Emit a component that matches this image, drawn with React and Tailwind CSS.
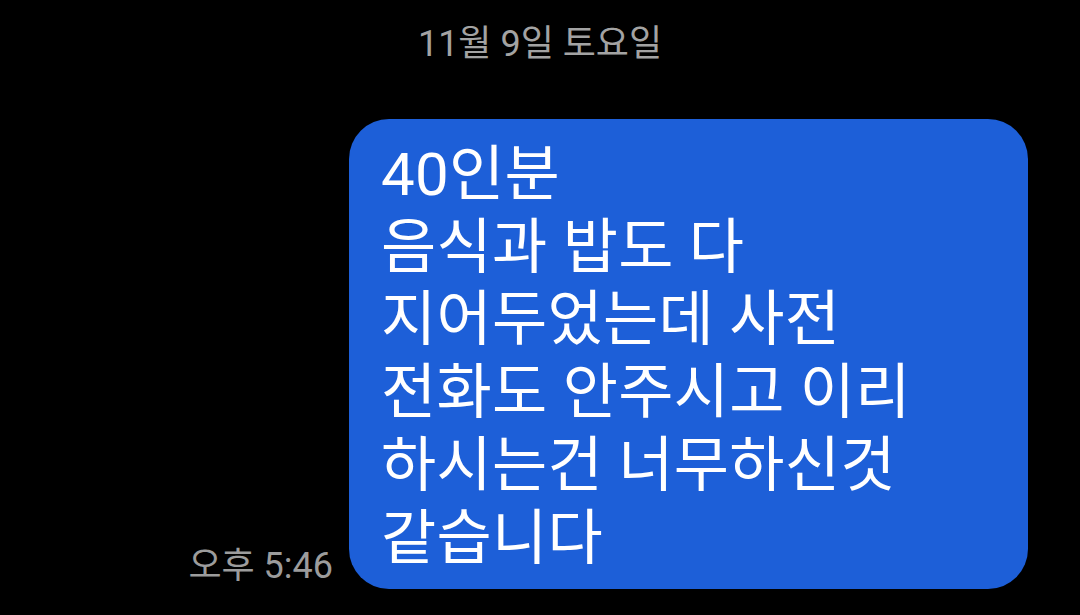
const lines = [
  "40인분",
  "음식과 밥도 다",
  "지어두었는데 사전",
  "전화도 안주시고 이리",
  "하시는건 너무하신것",
  "같습니다",
];

const App = () => {
  return (
    <div
      className="w-[1080px] h-[615px] bg-black flex flex-col overflow-hidden"
      style={{ fontFamily: 'Roboto, "Noto Sans CJK KR", "Noto Sans", sans-serif' }}
    >
      <div className="pt-[22px] text-center text-[36px] leading-[44px] text-[#a3a3a3]">
        11월 9일 토요일
      </div>

      <div className="flex flex-row items-end justify-end gap-[16px] pr-[52px] mt-[53px]">
        <div className="text-[36px] leading-[40px] text-[#9c9c9c] pb-[3px]">오후 5:46</div>
        <div className="w-[679px] h-[470px] bg-[#1d5fd8] rounded-[40px] pl-[32px] pt-[20px]">
          {lines.map((line, i) => (
            <div key={i} className="text-white text-[60px] leading-[72.7px] whitespace-nowrap tracking-[0.3px]">
              {line}
            </div>
          ))}
        </div>
      </div>
    </div>
  );
};

export default App;
